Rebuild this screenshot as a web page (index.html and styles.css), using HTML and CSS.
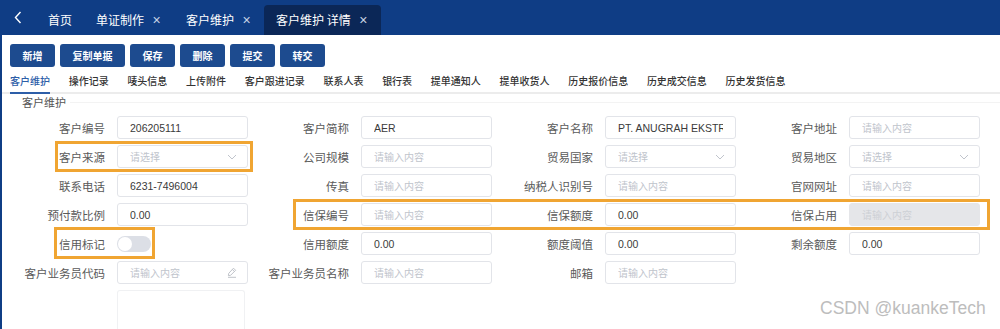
FILE: index.html
```html
<!DOCTYPE html>
<html lang="zh-CN">
<head>
    <meta charset="UTF-8">
    <title>客户维护 详情</title>
    <link rel="stylesheet" href="styles.css">
</head>
<body>

<div class="topbar">
    <span class="back">
        <svg width="8" height="13" viewBox="0 0 8 13"><polyline points="6.5,1 1.5,6.5 6.5,12" fill="none" stroke="#fff" stroke-width="1.4"/></svg>
    </span>
    <div class="nav-tab">首页</div>
    <div class="nav-tab">单证制作<span class="close">×</span></div>
    <div class="nav-tab">客户维护<span class="close">×</span></div>
    <div class="nav-tab active">客户维护 详情<span class="close">×</span></div>
</div>

<div class="main">
    <div class="toolbar">
        <button class="btn">新增</button>
        <button class="btn">复制单据</button>
        <button class="btn">保存</button>
        <button class="btn">删除</button>
        <button class="btn">提交</button>
        <button class="btn">转交</button>
    </div>

    <div class="tabs">
        <span class="tab active">客户维护</span>
        <span class="tab">操作记录</span>
        <span class="tab">唛头信息</span>
        <span class="tab">上传附件</span>
        <span class="tab">客户跟进记录</span>
        <span class="tab">联系人表</span>
        <span class="tab">银行表</span>
        <span class="tab">提单通知人</span>
        <span class="tab">提单收货人</span>
        <span class="tab">历史报价信息</span>
        <span class="tab">历史成交信息</span>
        <span class="tab">历史发货信息</span>
    </div>

    <div class="section-title"><span>客户维护</span></div>

    <div class="form">
        <!-- row 1 -->
        <div class="field"><label>客户编号</label><div class="control"><input value="206205111"></div></div>
        <div class="field"><label>客户简称</label><div class="control"><input value="AER"></div></div>
        <div class="field"><label>客户名称</label><div class="control"><input value="PT. ANUGRAH EKSTRAKSI INDONESIA"></div></div>
        <div class="field"><label>客户地址</label><div class="control"><input placeholder="请输入内容"></div></div>
        <!-- row 2 -->
        <div class="field"><label>客户来源</label><div class="control select"><input placeholder="请选择"><svg class="arrow" width="10" height="6" viewBox="0 0 10 6"><polyline points="1,1 5,5 9,1" fill="none" stroke="#c0c4cc" stroke-width="1"/></svg></div></div>
        <div class="field"><label>公司规模</label><div class="control"><input placeholder="请输入内容"></div></div>
        <div class="field"><label>贸易国家</label><div class="control select"><input placeholder="请选择"><svg class="arrow" width="10" height="6" viewBox="0 0 10 6"><polyline points="1,1 5,5 9,1" fill="none" stroke="#c0c4cc" stroke-width="1"/></svg></div></div>
        <div class="field"><label>贸易地区</label><div class="control select"><input placeholder="请选择"><svg class="arrow" width="10" height="6" viewBox="0 0 10 6"><polyline points="1,1 5,5 9,1" fill="none" stroke="#c0c4cc" stroke-width="1"/></svg></div></div>
        <!-- row 3 -->
        <div class="field"><label>联系电话</label><div class="control"><input value="6231-7496004"></div></div>
        <div class="field"><label>传真</label><div class="control"><input placeholder="请输入内容"></div></div>
        <div class="field"><label>纳税人识别号</label><div class="control"><input placeholder="请输入内容"></div></div>
        <div class="field"><label>官网网址</label><div class="control"><input placeholder="请输入内容"></div></div>
        <!-- row 4 -->
        <div class="field"><label>预付款比例</label><div class="control"><input value="0.00"></div></div>
        <div class="field"><label>信保编号</label><div class="control"><input placeholder="请输入内容"></div></div>
        <div class="field"><label>信保额度</label><div class="control"><input value="0.00"></div></div>
        <div class="field"><label>信保占用</label><div class="control"><input class="disabled" placeholder="请输入内容" disabled></div></div>
        <!-- row 5 -->
        <div class="field"><label>信用标记</label><div class="control"><span class="switch"><span class="knob"></span></span></div></div>
        <div class="field"><label>信用额度</label><div class="control"><input value="0.00"></div></div>
        <div class="field"><label>额度阈值</label><div class="control"><input value="0.00"></div></div>
        <div class="field"><label>剩余额度</label><div class="control"><input value="0.00"></div></div>
        <!-- row 6 -->
        <div class="field"><label>客户业务员代码</label><div class="control select"><input placeholder="请输入内容"><svg class="arrow pencil" width="10" height="11" viewBox="0 0 10 11"><path d="M6.5 1.2 L8.6 3.3 L3.6 8.3 L1.4 8.6 L1.7 6.4 Z M5.3 2.4 L7.4 4.5 M1 10.3 H9" fill="none" stroke="#b8bcc3" stroke-width="0.9"/></svg></div></div>
        <div class="field"><label>客户业务员名称</label><div class="control"><input placeholder="请输入内容"></div></div>
        <div class="field"><label>邮箱</label><div class="control"><input placeholder="请输入内容"></div></div>
        <div class="field"></div>
        <!-- row 7 -->
        <div class="field"><label></label><div class="control"><textarea></textarea></div></div>
    </div>
</div>

<div class="mark mark-source"></div>
<div class="mark mark-credit"></div>
<div class="mark mark-flag"></div>

<div class="watermark">CSDN @kuankeTech</div>

</body>
</html>
```

FILE: styles.css
```css
body {
    margin: 0;
    padding: 0;
    height: 329px;
    overflow: hidden;
    position: relative;
    background: #fff;
    font-family: "Noto Sans CJK SC", "Liberation Sans", sans-serif;
    color: #333;
}

.topbar {
    height: 35px;
    background-color: #0f3d85;
    display: flex;
    align-items: flex-end;
}

.back {
    width: 36px;
    height: 35px;
    display: flex;
    align-items: center;
    justify-content: center;
    align-self: stretch;
}

.nav-tab {
    height: 30px;
    line-height: 30px;
    padding: 0 12px;
    font-size: 12px;
    color: #fff;
    display: flex;
    align-items: center;
    border-radius: 4px 4px 0 0;
}

.nav-tab.active {
    background-color: #0b2757;
}

.nav-tab .close {
    width: 11px;
    margin-left: 7px;
    font-family: "Liberation Sans", sans-serif;
    font-size: 14px;
    color: #c9d3e6;
    text-align: center;
}

.main {
    border-left: 2px solid #0f3d85;
    height: 294px;
    overflow: hidden;
}

.toolbar {
    display: flex;
    gap: 5px;
    padding: 9px 0 0 8px;
}

.btn {
    height: 23px;
    padding: 0 12.5px;
    border: none;
    border-radius: 3px;
    background-color: #1d4b8f;
    color: #fff;
    font-family: "Noto Sans CJK SC", sans-serif;
    font-size: 10px;
    font-weight: 700;
    line-height: 23px;
}

.tabs {
    display: flex;
    gap: 18.7px;
    padding-left: 8px;
    border-bottom: 2px solid #ececec;
}

.tab {
    padding-top: 2px;
    line-height: 23px;
    font-size: 10px;
    font-weight: 500;
    color: #333;
    border-bottom: 2px solid transparent;
    margin-bottom: -2px;
}

.tab.active {
    color: #2d5ea8;
    border-bottom-color: #2d5ea8;
}

.section-title {
    display: flex;
    align-items: center;
    height: 16px;
    padding-left: 20px;
    font-size: 11px;
    color: #555;
}

.section-title::after {
    content: "";
    flex: 1;
    margin-left: 4px;
    border-top: 1px solid #f3f3f3;
}

.form {
    display: grid;
    grid-template-columns: repeat(4, 244px);
    row-gap: 6px;
    margin-top: 6px;
    padding-left: 2px;
}

.field {
    display: flex;
    align-items: center;
    height: 23px;
}

.field label {
    width: 113px;
    box-sizing: border-box;
    padding-right: 12px;
    text-align: right;
    font-size: 11.5px;
    color: #5a5a5a;
    white-space: nowrap;
}

.control {
    position: relative;
    width: 131px;
    height: 23px;
    display: flex;
    align-items: center;
}

.control input {
    width: 100%;
    height: 23px;
    box-sizing: border-box;
    padding: 0 12px;
    border: 1px solid #e2e4e9;
    border-radius: 3px;
    font-family: "Liberation Sans", "Noto Sans CJK SC", sans-serif;
    font-size: 10.5px;
    color: #3a3a3a;
    background: #fff;
    outline: none;
}

.control input::placeholder {
    color: #c0c4cc;
    font-family: "Noto Sans CJK SC", sans-serif;
    font-size: 10px;
}

.control input.disabled {
    background-color: #e5e6e9;
    border-color: #e5e6e9;
}

.control input.disabled::placeholder {
    color: #cdd0d5;
}

.arrow {
    position: absolute;
    right: 11px;
    top: 9px;
}

.pencil {
    top: 6px;
}

.switch {
    width: 34px;
    height: 16px;
    border-radius: 8px;
    background-color: #dcdfe6;
    display: flex;
    align-items: center;
    padding: 0 1px;
    box-sizing: border-box;
}

.knob {
    width: 14px;
    height: 14px;
    border-radius: 50%;
    background-color: #fff;
}

.control textarea {
    width: 128px;
    height: 40px;
    box-sizing: border-box;
    border: 1px solid #f0f1f3;
    border-bottom: none;
    border-radius: 3px 3px 0 0;
    resize: none;
    align-self: flex-start;
}

.mark {
    position: absolute;
    border: 3px solid #f0a532;
    box-sizing: border-box;
}

.mark-source {
    left: 55px;
    top: 141px;
    width: 198px;
    height: 31px;
}

.mark-credit {
    left: 293px;
    top: 199px;
    width: 697px;
    height: 31px;
}

.mark-flag {
    left: 54px;
    top: 227px;
    width: 101px;
    height: 32px;
}

.watermark {
    position: absolute;
    left: 820px;
    top: 298px;
    font-family: "Liberation Sans", sans-serif;
    font-size: 17.5px;
    color: #bdbdbd;
}
```
